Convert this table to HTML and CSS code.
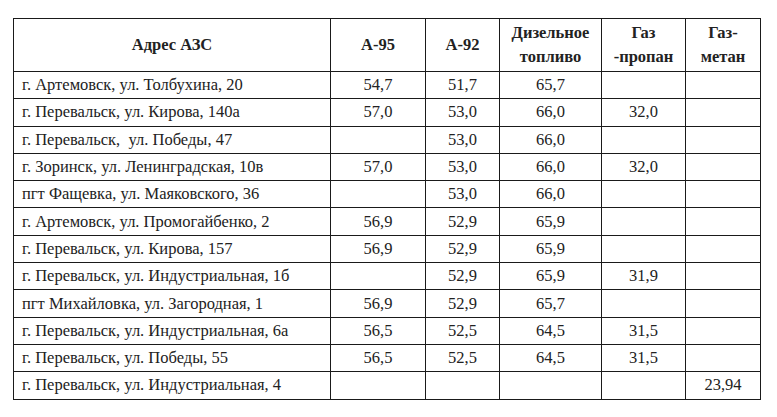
FILE: index.html
```html
<!DOCTYPE html>
<html lang="ru">
<head>
<meta charset="utf-8">
<title>Цены АЗС</title>
<link rel="stylesheet" href="styles.css">
</head>
<body>
<main class="wrap">
<table class="fuel">
  <colgroup>
    <col class="c-addr"><col class="c-95"><col class="c-92"><col class="c-dt"><col class="c-pr"><col class="c-me">
  </colgroup>
  <thead>
    <tr class="head">
      <th>Адрес АЗС</th>
      <th>А-95</th>
      <th>А-92</th>
      <th>Дизельное топливо</th>
      <th>Газ<br>-пропан</th>
      <th>Газ-<br>метан</th>
    </tr>
  </thead>
  <tbody>
    <tr><td class="addr">г. Артемовск, ул. Толбухина, 20</td><td>54,7</td><td>51,7</td><td>65,7</td><td></td><td></td></tr>
    <tr><td class="addr">г. Перевальск, ул. Кирова, 140а</td><td>57,0</td><td>53,0</td><td>66,0</td><td>32,0</td><td></td></tr>
    <tr><td class="addr">г. Перевальск,&nbsp; ул. Победы, 47</td><td></td><td>53,0</td><td>66,0</td><td></td><td></td></tr>
    <tr><td class="addr">г. Зоринск, ул. Ленинградская, 10в</td><td>57,0</td><td>53,0</td><td>66,0</td><td>32,0</td><td></td></tr>
    <tr><td class="addr">пгт Фащевка, ул. Маяковского, 36</td><td></td><td>53,0</td><td>66,0</td><td></td><td></td></tr>
    <tr><td class="addr">г. Артемовск, ул. Промогайбенко, 2</td><td>56,9</td><td>52,9</td><td>65,9</td><td></td><td></td></tr>
    <tr><td class="addr">г. Перевальск, ул. Кирова, 157</td><td>56,9</td><td>52,9</td><td>65,9</td><td></td><td></td></tr>
    <tr><td class="addr">г. Перевальск, ул. Индустриальная, 1б</td><td></td><td>52,9</td><td>65,9</td><td>31,9</td><td></td></tr>
    <tr><td class="addr">пгт Михайловка, ул. Загородная, 1</td><td>56,9</td><td>52,9</td><td>65,7</td><td></td><td></td></tr>
    <tr><td class="addr">г. Перевальск, ул. Индустриальная, 6а</td><td>56,5</td><td>52,5</td><td>64,5</td><td>31,5</td><td></td></tr>
    <tr><td class="addr">г. Перевальск, ул. Победы, 55</td><td>56,5</td><td>52,5</td><td>64,5</td><td>31,5</td><td></td></tr>
    <tr><td class="addr">г. Перевальск, ул. Индустриальная, 4</td><td></td><td></td><td></td><td></td><td>23,94</td></tr>
  </tbody>
</table>
</main>
</body>
</html>
```
FILE: styles.css
```css
html, body {
  margin: 0;
  padding: 0;
  background: #ffffff;
  font-family: "Liberation Serif", serif;
}
.wrap {
  display: block;
  padding: 18px 0 0 13px;
}
.fuel {
  border-collapse: collapse;
  table-layout: fixed;
  width: 747px;
  font-family: "Liberation Serif", serif;
  font-size: 16.5px;
  color: #222;
}
.c-addr { width: 317px; }
.c-95 { width: 95px; }
.c-92 { width: 74px; }
.c-dt { width: 102px; }
.c-pr { width: 84px; }
.c-me { width: 75px; }
.fuel th,
.fuel td {
  font-family: "Liberation Serif", serif;
  border: 1px solid #1a1a1a;
  padding: 0 8px;
  text-align: center;
  vertical-align: middle;
  line-height: 20px;
}
.fuel th {
  font-weight: bold;
  line-height: 24px;
}
.head {
  height: 53px;
}
.fuel tbody tr {
  height: 27.3px;
}
.fuel td.addr {
  text-align: left;
}
```
